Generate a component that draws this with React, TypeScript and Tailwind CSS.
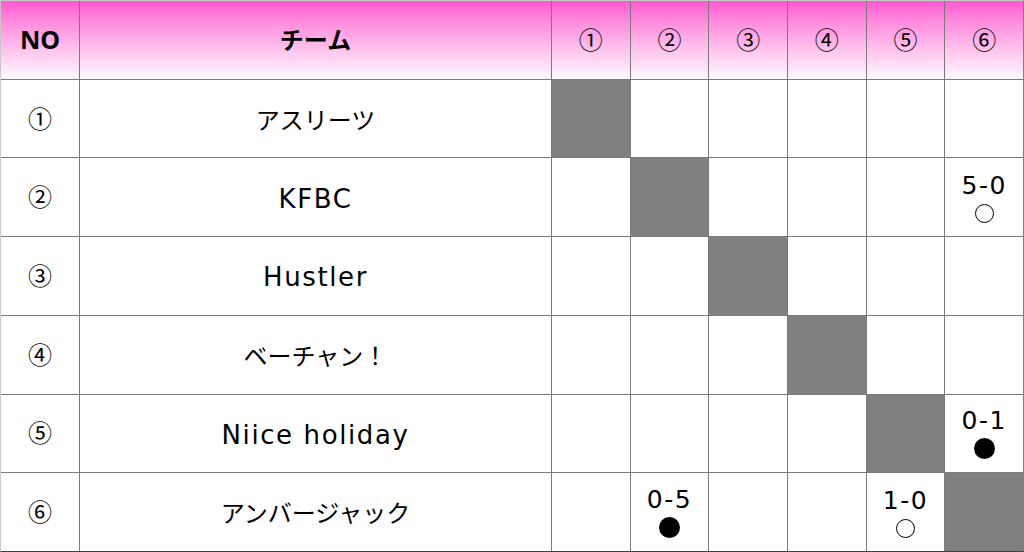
import React from "react";

const nums = ["①", "②", "③", "④", "⑤", "⑥"];
const teams = ["アスリーツ", "KFBC", "Hustler", "ベーチャン！", "Niice holiday", "アンバージャック"];
const latin = new Set(["KFBC", "Hustler", "Niice holiday"]);
type R = { s: string; win: boolean } | null;
const results: Record<string, R> = {
  "1-5": { s: "5-0", win: true },
  "4-5": { s: "0-1", win: false },
  "5-1": { s: "0-5", win: false },
  "5-4": { s: "1-0", win: true },
};

const font = { fontFamily: '"Noto Sans", "Noto Sans CJK JP", sans-serif' };
const latinFont = { fontFamily: '"DejaVu Sans", "Noto Sans CJK JP", sans-serif' };

function Result({ r }: { r: R }) {
  if (!r) return null;
  return (
    <div className="flex flex-col items-center">
      <div className="text-[25px] leading-[28px] tracking-[1.5px] text-black" style={latinFont}>{r.s}</div>
      {r.win ? (
        <div className="mt-[4px] h-[19px] w-[19px] rounded-full border-[1.5px] border-black bg-white" />
      ) : (
        <div className="mt-[3px] h-[21px] w-[21px] rounded-full bg-black" />
      )}
    </div>
  );
}

const head = "flex items-center justify-center bg-gradient-to-b from-[#ff58d0] to-[#fffafe] text-black";

export default function App() {
  return (
    <div className="h-[552px] w-[1024px] bg-white" style={font}>
      <div className="grid h-[552px] w-[1024px] grid-cols-[78px_471px_repeat(6,1fr)] grid-rows-7 gap-px border-t border-l border-t-[#c8c8c8] border-l-[#c8c8c8] border-b border-b-[#404040] border-r border-r-[#808080] bg-[#7a7a7a]">
        <div className={`${head} text-[25px] font-bold`}>NO</div>
        <div className={`${head} text-[24px] font-bold`}>チーム</div>
        {nums.map((n) => (
          <div key={n} className={`${head} text-[24px]`}>{n}</div>
        ))}
        {teams.map((t, i) => (
          <React.Fragment key={t}>
            <div className="flex items-center justify-center bg-white text-[24px] text-black">{nums[i]}</div>
            {latin.has(t) ? (
              <div className="flex items-center justify-center bg-white pt-[4px] text-[26px] tracking-[1.6px] text-black" style={latinFont}>{t}</div>
            ) : (
              <div className="flex items-center justify-center bg-white pt-[2px] text-[24px] text-black">{t}</div>
            )}
            {nums.map((_, j) =>
              i === j ? (
                <div key={j} className="bg-[#808080]" />
              ) : (
                <div key={j} className="flex items-center justify-center bg-white">
                  <Result r={results[`${i}-${j}`] ?? null} />
                </div>
              )
            )}
          </React.Fragment>
        ))}
      </div>
    </div>
  );
}
